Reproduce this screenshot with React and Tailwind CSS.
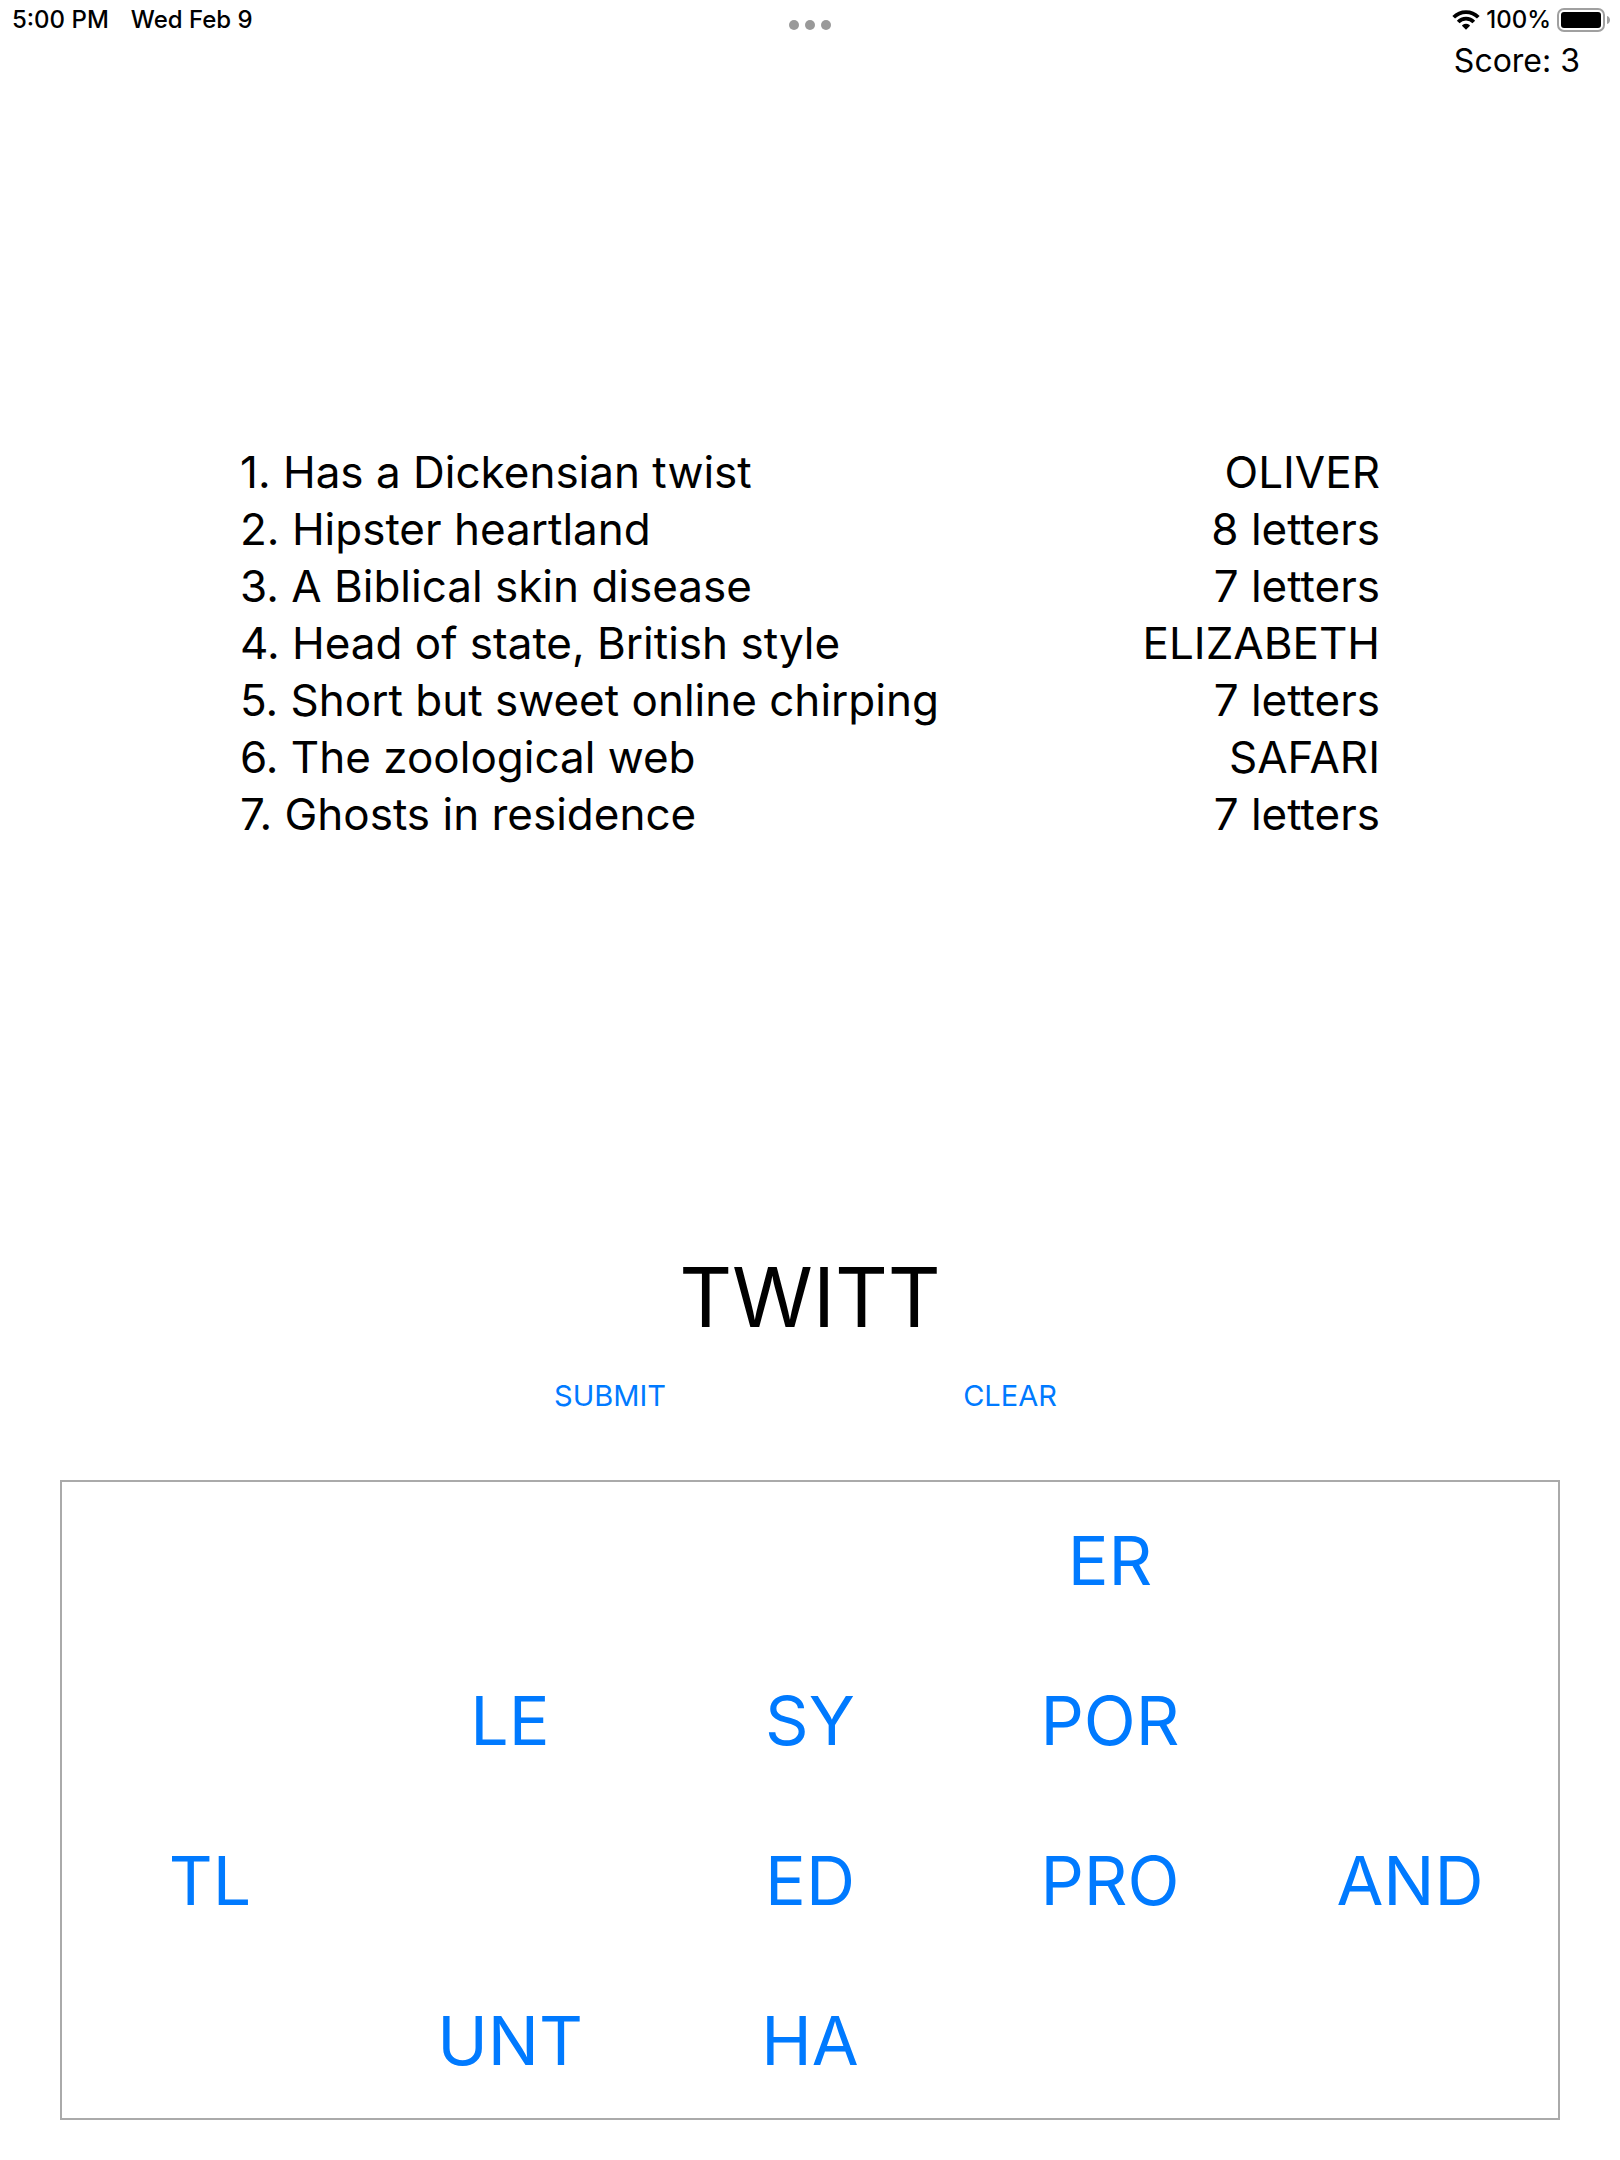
import React from "react";

const clues = [
  ["1. Has a Dickensian twist", "OLIVER"],
  ["2. Hipster heartland", "8 letters"],
  ["3. A Biblical skin disease", "7 letters"],
  ["4. Head of state, British style", "ELIZABETH"],
  ["5. Short but sweet online chirping", "7 letters"],
  ["6. The zoological web", "SAFARI"],
  ["7. Ghosts in residence", "7 letters"],
];

const letters = [
  "", "", "", "ER", "",
  "", "LE", "SY", "POR", "",
  "TL", "", "ED", "PRO", "AND",
  "", "UNT", "HA", "", "",
];

export default function App() {
  return (
    <div className="flex min-h-screen flex-col bg-white font-['Inter','Liberation_Sans',sans-serif] text-black">
      <header className="grid h-10 grid-cols-3 items-center px-2.5 text-2xl font-medium">
        <div className="flex gap-[22px] pl-0.5">
          <time>5:00 PM</time>
          <span>Wed Feb 9</span>
        </div>
        <button aria-label="Window options" className="flex justify-center gap-1.5 pt-2.5">
          <span className="size-2.5 rounded-full bg-[#999]" />
          <span className="size-2.5 rounded-full bg-[#999]" />
          <span className="size-2.5 rounded-full bg-[#999]" />
        </button>
        <div className="flex items-center justify-end gap-1.5">
          <svg width="28" height="20" viewBox="0 0 28 20" role="img" aria-label="Wi-Fi">
            <path d="M14 19.8l3.8-3.8q.3-.5-.2-.9a5.7 5.7 0 0 0-7.2 0q-.5.4-.2.9z" />
            <path d="M1.7 7.3a17 17 0 0 1 24.6 0M6.2 12a10.6 10.6 0 0 1 15.6 0" fill="none" stroke="#000" strokeWidth="3.7" />
          </svg>
          <span>100%</span>
          <svg width="53" height="24" viewBox="0 0 53 24" role="img" aria-label="Battery full">
            <rect x="1" y="1" width="46" height="22" rx="6" fill="none" stroke="#a0a0a0" strokeWidth="2" />
            <rect x="4" y="4" width="40" height="16" rx="3" />
            <path d="M50 8c4 1 4 7 0 8z" fill="#a0a0a0" />
          </svg>
        </div>
      </header>
      <p className="px-10 text-right text-[32px] leading-[42px]">Score: 3</p>
      <dl className="mt-[362px] flex flex-col px-60 text-[44px] leading-[57px]">
        {clues.map(([clue, answer]) => (
          <div key={clue} className="flex justify-between">
            <dt>{clue}</dt>
            <dd>{answer}</dd>
          </div>
        ))}
      </dl>
      <output className="mt-[401px] text-center text-[82px] leading-[108px]">TWITT</output>
      <div className="mx-auto grid h-22 w-full max-w-[800px] grid-cols-2 text-[29px] text-[#007aff]">
        <button>SUBMIT</button>
        <button>CLEAR</button>
      </div>
      <div className="mx-15 mt-10 grid grid-cols-5 text-[68px] text-[#007aff] inset-ring-2 inset-ring-[#aaa]">
        {letters.map((text, i) =>
          text ? <button key={i} className="h-40">{text}</button> : <span key={i} className="h-40" />
        )}
      </div>
    </div>
  );
}
